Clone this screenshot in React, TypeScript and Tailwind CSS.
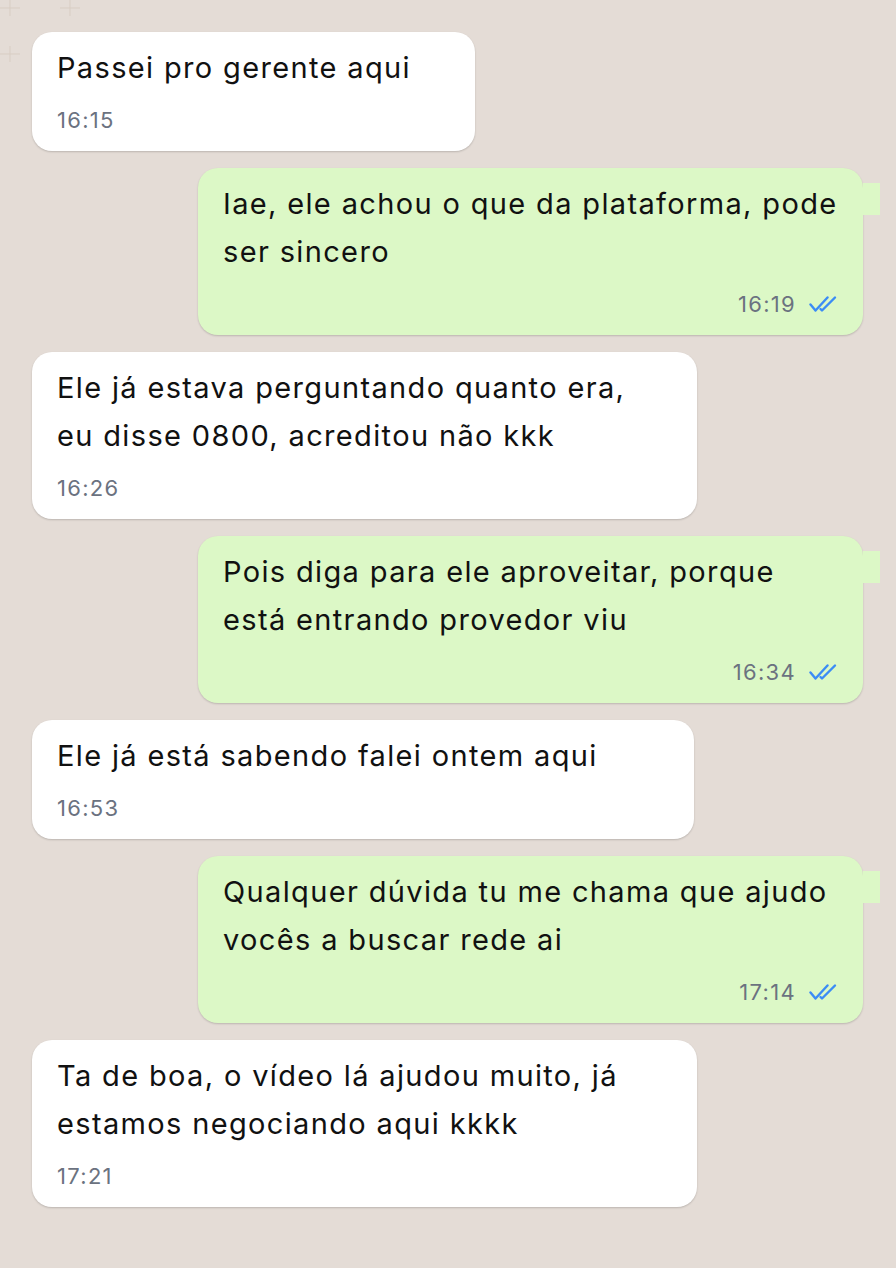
const messages = [
    { from: "them", lines: ["Passei pro gerente aqui"], time: "16:15", w: "w-[443px]" },
    { from: "me", lines: ["Iae, ele achou o que da plataforma, pode", "ser sincero"], time: "16:19", w: "w-[665px]" },
    { from: "them", lines: ["Ele já estava perguntando quanto era,", "eu disse 0800, acreditou não kkk"], time: "16:26", w: "w-[665px]" },
    { from: "me", lines: ["Pois diga para ele aproveitar, porque", "está entrando provedor viu"], time: "16:34", w: "w-[665px]" },
    { from: "them", lines: ["Ele já está sabendo falei ontem aqui"], time: "16:53", w: "w-[662px]" },
    { from: "me", lines: ["Qualquer dúvida tu me chama que ajudo", "vocês a buscar rede ai"], time: "17:14", w: "w-[665px]" },
    { from: "them", lines: ["Ta de boa, o vídeo lá ajudou muito, já", "estamos negociando aqui kkkk"], time: "17:21", w: "w-[665px]" },
];

function DoubleCheck() {
    return (
        <svg width="28" height="18" viewBox="0 0 28 18" fill="none" stroke="#3b8cf5" strokeWidth="2.4" strokeLinecap="round" strokeLinejoin="round">
            <path d="M1.5 9.5 L6.5 15.5 L18.5 2.5" />
            <path d="M11.5 14 L13 15.5 L26 2.5" />
        </svg>
    );
}

function Plus({ className }: { className: string }) {
    return (
        <svg className={className} width="20" height="16" viewBox="0 0 20 16" fill="none" stroke="#d8cdc3" strokeWidth="1">
            <path d="M10 0 V16 M0 8 H20" />
        </svg>
    );
}

export default function App() {
    return (
        <div
            className="relative min-h-screen bg-[#e4dcd6] px-[32px] pt-[32px] pb-[60px] text-[#111]"
            style={{ fontFamily: "Inter, 'Noto Sans', sans-serif" }}
        >
            <Plus className="absolute left-0 top-0" />
            <Plus className="absolute left-[60px] top-0" />
            <Plus className="absolute left-0 top-[46px]" />
            <div className="relative flex flex-col gap-[17px]">
                {messages.map((m, i) => {
                    const mine = m.from === "me";
                    return (
                        <div
                            key={i}
                            className={`relative ${m.w} rounded-[20px] pl-[25px] pr-[26px] pt-[12px] pb-[17px] shadow-[0_1px_2px_rgba(0,0,0,0.18)] ${
                                mine ? "self-end mr-[1px] bg-[#dcf8c6]" : "self-start bg-white"
                            }`}
                        >
                            {mine && (
                                <div className="absolute -right-[17px] top-[15px] h-[32px] w-[17px] bg-[#dcf8c6]" />
                            )}
                            <div className="text-[29px] leading-[48px] tracking-[1.35px]">
                                {m.lines.map((l, j) => (
                                    <div key={j} className="whitespace-nowrap">
                                        {l}
                                    </div>
                                ))}
                            </div>
                            <div
                                className={`mt-[14px] flex items-center gap-[13px] text-[22px] leading-[28px] tracking-[1.3px] text-[#6b7280] ${
                                    mine ? "justify-end" : ""
                                }`}
                            >
                                <span>{m.time}</span>
                                {mine && <DoubleCheck />}
                            </div>
                        </div>
                    );
                })}
            </div>
        </div>
    );
}
